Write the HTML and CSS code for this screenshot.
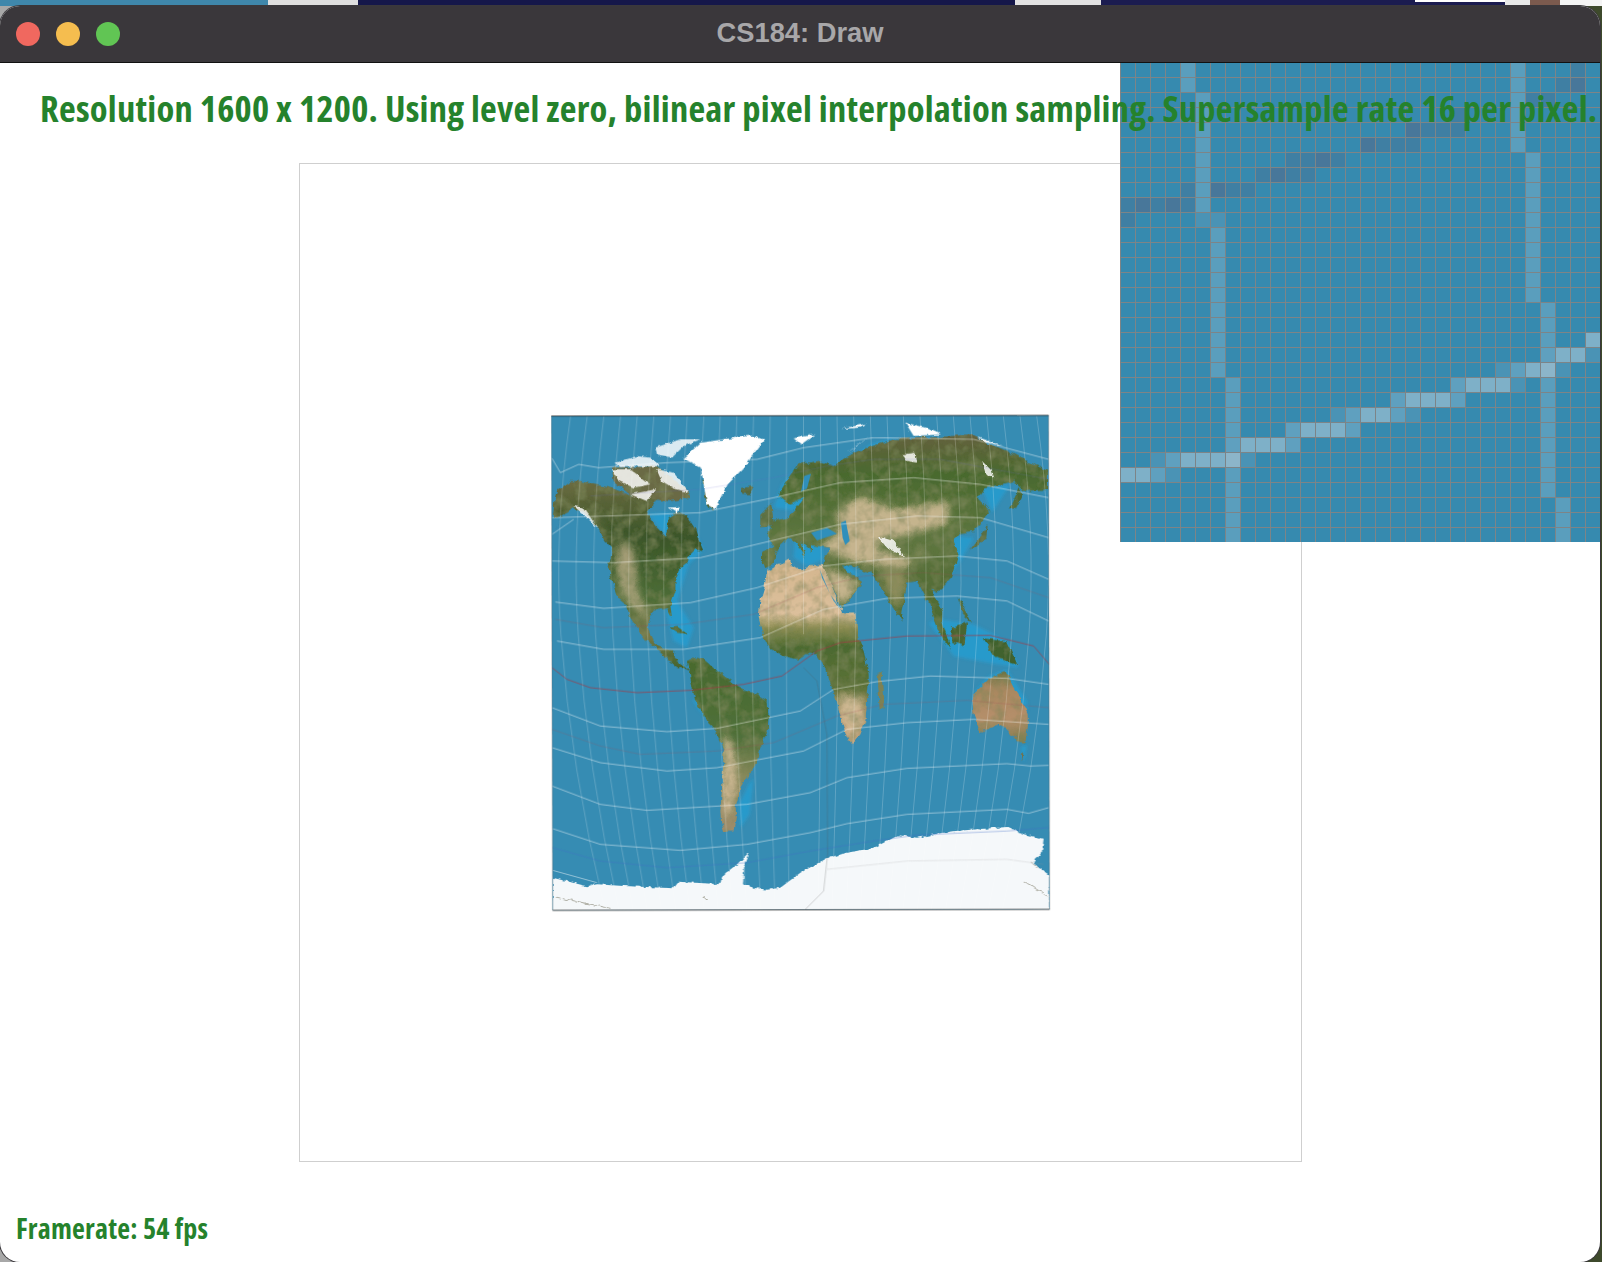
FILE: index.html
```html
<!DOCTYPE html>
<html lang="en">
<head>
<meta charset="utf-8">
<title>CS184: Draw</title>
<link rel="stylesheet" href="styles.css">
</head>
<body>
<div class="desktop-strip">
  <span class="seg seg-blue"></span><span class="seg seg-paper"></span><span class="seg seg-navy"></span><span class="seg seg-light"></span><span class="seg seg-navy2"></span><span class="seg seg-white"></span><span class="seg seg-paper2"></span><span class="seg seg-face"></span><span class="seg seg-white2"></span>
</div>
<main class="window">
  <header class="titlebar">
    <div class="lights"><span class="light red"></span><span class="light yellow"></span><span class="light green"></span></div>
    <div class="title">CS184: Draw</div>
  </header>
  <section class="content">
    <p class="status">Resolution 1600 x 1200. Using level zero, bilinear pixel interpolation sampling. Supersample rate 16 per pixel.</p>
    <div class="canvas">
      <svg class="map" viewBox="550 412 500 500" aria-label="World map">
        <defs>
          <clipPath id="quad"><path d="M33 45L1525 43L1528 1525L37 1528Z"/></clipPath>
          <path id="na" d="M38 352L42 300L50 270L90 240L120 240L160 250L215 262L250 275L285 290L320 285L350 280L345 300L320 340L345 375L375 405L385 375L385 350L410 335L440 345L465 385L472 410L490 450L465 445L440 470L445 480L420 500L405 530L405 570L390 612L395 650L380 622L340 628L330 650L320 680L345 730L375 745L402 748L400 770L425 790L450 815L410 795L375 768L345 740L320 720L290 680L270 650L255 610L232 590L215 540L205 500L216 442L195 420L170 372L130 335L100 320L60 350L40 400L62 345Z"/>
          <path id="sa" d="M440 782L465 770L490 775L530 810L585 850L612 866L650 880L682 900L684 950L682 990L660 1040L650 1080L640 1100L615 1135L600 1160L585 1220L590 1250L582 1292L552 1292L542 1260L540 1230L546 1150L550 1050L520 980L490 945L465 900L450 830Z"/>
          <path id="af" d="M655 650L660 600L672 560L680 512L710 495L745 473L750 490L785 510L810 492L845 492L865 530L880 570L905 635L945 635L950 680L950 700L970 750L985 820L985 845L975 960L960 1000L935 1032L920 1010L905 960L880 870L850 790L830 760L805 755L775 775L745 770L690 745L670 710Z"/>
          <path id="eu" d="M665 455L665 480L672 502L700 490L705 460L720 432L745 410L770 430L795 470L780 420L815 450L815 432L870 440L855 470L845 495L860 520L905 622L965 548L950 525L925 520L905 490L950 498L1000 520L1040 590L1072 642L1090 660L1085 640L1100 545L1130 540L1170 620L1200 700L1232 745L1205 660L1206 632L1172 562L1192 572L1232 530L1255 460L1240 420L1255 400L1300 392L1350 332L1312 292L1332 262L1420 240L1450 270L1524 265L1522 210L1400 150L1330 120L1290 100L1200 108L1060 115L982 140L922 165L880 195L835 180L772 190L720 270L716 285L745 310L790 290L760 330L742 350L700 360L682 402L700 440Z"/>
          <path id="au" d="M1295 885L1320 860L1350 830L1395 810L1420 860L1445 900L1462 940L1462 980L1455 1025L1430 1020L1400 985L1375 970L1345 980L1320 995L1300 940Z"/>
          <clipPath id="landclip"><use href="#na"/><use href="#sa"/><use href="#af"/><use href="#eu"/><use href="#au"/></clipPath>
          <linearGradient id="africa" gradientUnits="userSpaceOnUse" x1="0" y1="480" x2="0" y2="1040">
            <stop offset="0" stop-color="#d4b68e"/><stop offset=".28" stop-color="#dcc09c"/><stop offset=".36" stop-color="#8b8c52"/><stop offset=".46" stop-color="#4c6a30"/><stop offset=".68" stop-color="#5d7239"/><stop offset=".82" stop-color="#b39a70"/><stop offset="1" stop-color="#c09a72"/>
          </linearGradient>
          <linearGradient id="namerica" gradientUnits="userSpaceOnUse" x1="0" y1="240" x2="0" y2="800">
            <stop offset="0" stop-color="#6b6b40"/><stop offset=".3" stop-color="#3b5629"/><stop offset=".62" stop-color="#4c6c36"/><stop offset=".82" stop-color="#75794a"/><stop offset="1" stop-color="#46642e"/>
          </linearGradient>
          <linearGradient id="samerica" gradientUnits="userSpaceOnUse" x1="0" y1="770" x2="0" y2="1300">
            <stop offset="0" stop-color="#486a2e"/><stop offset=".45" stop-color="#50703a"/><stop offset=".68" stop-color="#8a8a5c"/><stop offset="1" stop-color="#a08d6c"/>
          </linearGradient>
          <linearGradient id="eurasia" gradientUnits="userSpaceOnUse" x1="0" y1="110" x2="0" y2="720">
            <stop offset="0" stop-color="#62623c"/><stop offset=".18" stop-color="#4a6a2f"/><stop offset=".5" stop-color="#5e7640"/><stop offset=".7" stop-color="#566e38"/><stop offset="1" stop-color="#486a31"/>
          </linearGradient>
          <linearGradient id="australia" gradientUnits="userSpaceOnUse" x1="0" y1="800" x2="0" y2="1030">
            <stop offset="0" stop-color="#5d6f3a"/><stop offset=".25" stop-color="#a8875f"/><stop offset=".65" stop-color="#b58f6a"/><stop offset="1" stop-color="#7d7a4c"/>
          </linearGradient>
          <filter id="soft" x="-10%" y="-10%" width="120%" height="120%"><feGaussianBlur stdDeviation="11"/></filter>
          <filter id="haze" x="-20%" y="-20%" width="140%" height="140%"><feGaussianBlur stdDeviation="4"/></filter>
          <filter id="land" x="0" y="0" width="100%" height="100%">
            <feTurbulence type="fractalNoise" baseFrequency=".05" numOctaves="3" seed="4" result="w"/>
            <feDisplacementMap in="SourceGraphic" in2="w" scale="16" xChannelSelector="R" yChannelSelector="G" result="d"/>
            <feGaussianBlur in="d" stdDeviation="1.6" result="b"/>
            <feTurbulence type="fractalNoise" baseFrequency=".028" numOctaves="3" seed="9" result="n"/>
            <feColorMatrix in="n" type="matrix" values="0 0 0 0 .2  0 0 0 0 .24  0 0 0 0 .1  1.5 0 0 0 -.62" result="c"/>
            <feComposite in="c" in2="b" operator="in" result="m"/>
            <feMerge><feMergeNode in="b"/><feMergeNode in="m"/></feMerge>
          </filter>
          <filter id="rough" x="0" y="0" width="100%" height="100%">
            <feTurbulence type="fractalNoise" baseFrequency=".06" numOctaves="3" seed="2" result="w"/>
            <feDisplacementMap in="SourceGraphic" in2="w" scale="12" xChannelSelector="R" yChannelSelector="G" result="d"/>
            <feGaussianBlur in="d" stdDeviation="1.2"/>
          </filter>
        </defs>
        <g transform="translate(539.3 400) scale(.33333)">
          <path class="ocean" d="M33 45L1525 43L1528 1525L37 1528Z"/>
          <g clip-path="url(#quad)">
            <g class="shallow" filter="url(#haze)">
              <path d="M325 340L380 335L440 350L490 445L445 490L410 600L460 680L440 740L400 720L380 640L395 520L380 410Z"/>
              <path d="M700 320L725 250L775 195L850 205L930 175L990 130L1060 112L1000 170L850 235L770 330Z"/>
              <path d="M1165 665L1200 655L1300 670L1400 720L1435 800L1340 785L1240 765Z"/>
              <path d="M1245 405L1300 410L1260 480L1195 565L1185 545Z"/>
              <path d="M1325 262L1410 250L1355 335Z"/>
              <path d="M595 1210L625 1150L640 1130L628 1240L600 1280Z"/>
              <path d="M1300 875L1345 825L1400 805L1460 900L1462 930L1400 860Z"/>
              <path d="M455 895L475 925L500 950L470 900Z"/>
              <path d="M1440 1040L1460 1030L1452 1085Z"/>
              <path d="M840 400L810 430L765 410L760 470L800 495L850 475Z"/>
              <path d="M905 480L960 525L920 515Z"/>
            </g>
            <g filter="url(#land)">
              <use href="#na" fill="url(#namerica)"/>
              <use href="#sa" fill="url(#samerica)"/>
              <use href="#af" fill="url(#africa)"/>
              <use href="#eu" fill="url(#eurasia)"/>
              <use href="#au" fill="url(#australia)"/>
              <path fill="#7e8154" d="M1012 820L1024 815L1030 925L1018 925Z"/>
              <path fill="#4a6533" d="M1235 680L1280 668L1272 735L1232 722Z"/>
              <path fill="#40622d" d="M1330 712L1400 722L1432 792L1362 768Z"/>
              <path fill="#4d6a35" d="M1255 590L1270 615L1292 665L1268 640Z"/>
              <path fill="#4c6934" d="M1408 325L1438 262L1448 280L1428 320Z"/>
              <path fill="#5a6e42" d="M1288 448L1335 385L1342 370L1338 410L1310 435Z"/>
              <path fill="#5b6f43" d="M660 342L692 308L702 372L660 378Z"/>
              <path fill="#55683e" d="M602 262L640 255L628 280L606 278Z"/>
              <path fill="#4f6b38" d="M385 680L412 678L445 700L410 695Z"/>
              <path fill="#74704c" d="M1442 1058L1452 1055L1448 1080Z"/>
              <path fill="#51683b" d="M486 240L500 315L520 325L510 240Z"/>
              <path fill="#6a6a45" d="M215 200L350 195L445 270L450 290L390 300L280 290L220 240Z"/>
              <g clip-path="url(#landclip)">
                <g class="tan" filter="url(#soft)">
                  <path d="M885 335L960 285L1060 325L1225 300L1225 365L1130 395L1020 420L1005 445L1120 480L1140 440L1150 450L1100 500L1000 490L930 480L840 440L900 385Z"/>
                  <path d="M845 495L880 510L960 545L905 620L870 560Z"/>
                  <path class="tan-soft" d="M225 495L245 410L280 450L295 580L335 670L305 640L250 590Z"/>
                  <path d="M548 1000L572 1020L590 1100L580 1220L552 1250L548 1120Z"/>
                  <path d="M895 880L960 890L970 950L935 1030L905 950Z"/>
                  <path d="M1020 500L1090 510L1100 550L1072 630L1040 570Z" class="tan2"/>
                  <path d="M90 310L130 330L190 400L215 430L170 360Z" class="tan2"/>
                </g>
              </g>
            </g>
            <g class="ice" filter="url(#rough)">
              <path d="M430 172L480 125L630 104L672 115L610 200L562 250L525 325L500 310L490 250L482 200Z"/>
              <path class="ice-patchy" d="M226 185L290 165L330 170L360 195L240 198Z"/>
              <path class="ice-patchy" d="M345 140L420 115L480 115L430 135L395 170L350 160Z"/>
              <path class="ice-patchy" d="M215 205L270 205L330 250L280 260L235 240Z"/>
              <path class="ice-patchy" d="M350 205L400 215L445 275L400 262L365 240Z"/>
              <path class="ice-patchy" d="M270 280L345 265L320 300Z"/>
              <path d="M760 112L825 100L782 130Z"/>
              <path d="M920 155L990 104L950 135Z"/>
              <path d="M1095 65L1155 80L1202 100L1120 105Z"/>
              <path d="M900 84L980 68L960 80Z"/>
              <path d="M1310 108L1390 135L1330 122Z"/>
              <path class="ice-patchy" d="M1085 160L1125 155L1130 185L1100 180Z"/>
              <path class="ice-patchy" d="M1325 180L1350 205L1360 235L1335 215Z"/>
              <path class="ice-patchy" d="M100 315L130 320L175 385L135 345Z"/>
              <path class="ice-patchy" d="M1010 405L1060 420L1095 470L1040 440Z"/>
              <path d="M385 320L415 318L410 335Z"/>
            </g>
            <g class="sea">
              <path d="M812 395L860 380L890 398L830 418Z"/>
              <path d="M902 365L916 358L928 420L915 432L907 410Z"/>
              <path d="M838 505L870 580L905 630L880 600L845 530Z"/>
              <path d="M792 225L812 218L800 262L782 272Z"/>
            </g>
            <g transform="translate(0 750)" filter="url(#rough)">
              <path class="ant" d="M37 680L140 706L170 700L250 705L400 712L415 692L540 700L545 675L590 640L625 605L612 640L608 700L640 710L680 716L720 710L780 665L860 622L920 605L1000 590L1075 553L1130 560L1190 548L1245 540L1400 528L1450 550L1510 563L1505 600L1490 620L1480 640L1527 672L1527 790L37 790Z"/>
              <path class="nun" d="M45 738L210 772M1450 690L1520 735M1470 635L1490 650M490 735L505 750"/>
            </g>
            <g class="meridians">
              <g id="mer">
                <path d="M840 45q4 355 2 655q-2 400 -9 825M890 45q7 355 4 655q-4 400 -19 825M940 45q11 355 6 655q-6 400 -28 825M990 45q14 355 8 655q-8 400 -38 825M1040 45q18 355 10 655q-10 400 -47 825M1089 45q23 355 13 655q-13 400 -56 825M1139 45q26 355 15 655q-15 400 -66 825M1189 45q30 355 17 655q-17 400 -75 825M1239 45q33 355 19 655q-19 400 -85 825M1289 45q37 355 21 655q-21 400 -94 825M1339 45q41 355 23 655q-23 400 -103 825M1389 45q44 355 25 655q-25 400 -113 825M1439 45q48 355 27 655q-27 400 -122 825M1489 45q51 355 29 655q-29 400 -132 825"/>
              </g>
              <use href="#mer" transform="translate(1580 0) scale(-1 1)"/>
              <path d="M790 45V700"/>
            </g>
            <g class="parallels">
              <path d="M35 172L60 215L115 190L175 200L380 185L650 175L790 140L1000 110L1300 115L1525 175"/>
              <path d="M35 350L200 345L480 335L700 290L900 245L1120 230L1320 250L1525 290"/>
              <path d="M35 400L100 355M35 480L220 485L480 470L690 420L900 370L1130 345L1320 350L1525 410"/>
              <path d="M45 603L190 622L450 605L650 560L850 495L1030 475L1250 465L1400 480L1525 535"/>
              <path d="M50 720L190 745L430 745L660 710L850 625L1040 592L1250 585L1400 600L1525 660"/>
              <g transform="translate(0 750)">
                <path d="M35 170L180 225L380 242L530 232L780 180L880 115L1010 92L1170 75L1400 82L1525 100"/>
                <path d="M35 290L180 335L380 360L530 350L790 300L920 235L1100 215L1300 205L1525 220"/>
                <path d="M35 405L180 460L320 478L620 460L810 425L920 380L1100 352L1400 338L1470 345L1525 343"/>
                <path d="M37 533L180 580L420 598L620 580L810 545L920 518L1100 490L1400 475L1465 487L1525 470"/>
                <path d="M37 658L170 695"/>
                <path class="on-ice" d="M860 655L1100 630L1400 625L1510 640"/>
              </g>
            </g>
            <path class="tropic" d="M45 655L190 680L430 670L640 640L830 560L970 525L1150 515L1350 530L1525 590"/>
            <path class="tropic" d="M35 985L180 1035L300 1060L530 1050L700 1025L890 945L1030 910L1280 898L1525 920"/>
            <path class="equator" d="M35 800L80 835L150 860L290 875L450 868L610 850L725 825L830 750L900 725L1100 705L1350 703L1480 735L1527 790"/>
            <path class="polar" d="M37 1340L180 1380L380 1400L620 1385L810 1350L1000 1320L1130 1302L1400 1290L1525 1280"/>
            <path class="arctic" d="M150 285L480 265L700 230L860 195L1000 175L1200 175L1525 235"/>
            <path class="central" d="M790 800L830 840L860 1000L862 1360L850 1470L795 1525"/>
          </g>
          <path class="edge" d="M33 45L1525 43M37 1528L1528 1525"/>
          <path class="edge-side" d="M33 45L37 1528M1525 43L1528 1525"/>
        </g>
      </svg>
    </div>
    <aside class="magnifier">
      <svg class="mag-cells" viewBox="0 0 32 32" shape-rendering="crispEdges">
        <path class="c-line" d="M4 0h1v2h-1zM5 2h1v9h-1zM6 11h1v10h-1zM7 21h1v11h-1zM26 0h1v6h-1zM27 6h1v10h-1zM28 16h1v13h-1zM29 29h1v3h-1z"/>
        <path class="c-faint" d="M3 27h1v1h-1zM2 26h1v1h-1zM8 26h1v1h-1zM14 23h1v1h-1zM19 23h1v1h-1zM25 20h1v1h-1zM29 20h1v1h-1zM31 19h1v1h-1zM26 21h1v1h-1zM5 10h2v1h-2z"/>
        <path class="c-med" d="M2 27h1v1h-1zM3 26h1v1h-1zM7 25h1v1h-1zM11 25h1v1h-1zM11 24h1v1h-1zM15 24h1v1h-1zM15 23h1v1h-1zM18 23h1v1h-1zM18 22h1v1h-1zM22 22h1v1h-1zM22 21h1v1h-1zM26 20h1v1h-1zM28 19h1v1h-1z"/>
        <path class="c-bright" d="M0 27h2v1h-2zM4 26h3v1h-3zM8 25h3v1h-3zM12 24h3v1h-3zM16 23h2v1h-2zM19 22h3v1h-3zM23 21h3v1h-3zM27 20h1v1h-1zM29 19h2v1h-2zM31 18h1v1h-1z"/>
        <path class="c-top" d="M7 26h1v1h-1zM28 20h1v1h-1z"/>
        <path class="d-faint" d="M30 0h1v1h-1zM29 1h1v1h-1zM27 2h2v1h-2zM20 4h3v1h-3zM17 5h2v1h-2zM19 5h1v1h-1zM11 6h2v1h-2zM14 6h1v1h-1zM9 7h1v1h-1zM11 7h2v1h-2zM4 8h1v1h-1zM8 8h1v1h-1zM0 9h1v1h-1zM2 9h1v1h-1zM4 9h1v1h-1zM0 10h1v1h-1zM7 8h1v1h-1zM22 3h1v1h-1z"/>
        <path class="d-dark" d="M30 1h1v1h-1zM19 4h1v1h-1zM16 5h1v1h-1zM13 6h1v1h-1zM10 7h1v1h-1zM6 8h1v1h-1zM1 9h1v1h-1zM3 9h1v1h-1z"/>
      </svg>
    </aside>
    <p class="framerate">Framerate: 54 fps</p>
  </section>
</main>
</body>
</html>
```
FILE: styles.css
```css
* { box-sizing: border-box; }
html, body { margin: 0; height: 100%; }
body {
  background: linear-gradient(90deg, #a8a8a8 50%, #3e4a2c 50%);
  overflow: hidden;
  font-family: "Open Sans", "Liberation Sans", sans-serif;
  display: flex;
  flex-direction: column;
}
.desktop-strip { display: flex; height: 6px; flex: none; background: #15174a; }
.seg { display: block; height: 100%; }
.seg-blue { width: 268px; background: #3f87ab; }
.seg-paper { width: 90px; background: #dfdfdf; }
.seg-navy { width: 657px; background: #15174a; }
.seg-light { width: 86px; background: #e2e2e2; }
.seg-navy2 { width: 314px; background: #1b1c50; }
.seg-white { width: 90px; background: linear-gradient(#fff 2px, #1b1c50 2px); }
.seg-paper2 { width: 25px; background: #e8e8e8; }
.seg-face { width: 30px; background: #7b5a4e; }
.seg-white2 { flex: 1; background: #f4f4f4; }
.window {
  flex: 1;
  width: 1600px;
  margin-right: 2px;
  display: flex;
  flex-direction: column;
  border-radius: 20px;
  overflow: hidden;
  background: #fff;
  box-shadow: 0 0 0 1px #3a383c;
}
.titlebar {
  flex: none;
  height: 57px;
  background: #3a373b;
  border-bottom: 1px solid #111;
  display: flex;
  align-items: center;
  position: relative;
  z-index: 3;
}
.lights { display: flex; gap: 16px; padding-left: 16px; }
.light { width: 24px; height: 24px; border-radius: 50%; }
.red { background: #f0685f; }
.yellow { background: #f5bd4f; }
.green { background: #61c554; }
.title {
  position: absolute;
  left: 0; right: 0; top: -1px; bottom: 1px;
  display: flex; align-items: center; justify-content: center;
  font: bold 27.3px "Liberation Sans", Arial, sans-serif;
  color: #a8a7a9;
}
.content { flex: 1; position: relative; display: flex; flex-direction: column; }
.status {
  position: relative;
  z-index: 2;
  margin: 0;
  padding: 21px 0 0 40px;
  height: 100px;
  font-size: 36.5px;
  line-height: 48px;
  letter-spacing: .25px;
  font-weight: 700;
  font-stretch: 75%;
  color: #25822c;
  white-space: nowrap;
}
.canvas {
  width: 1003px;
  height: 999px;
  margin-left: 299px;
  border: 1px solid #cfcfcf;
  display: flex;
  align-items: center;
  justify-content: center;
  flex: none;
}
.map { width: 500px; height: 500px; display: block; }
.ocean { fill: #368cb3; }
.shallow path { fill: #1fa3da; opacity: .6; }
.tan path { fill: #d8bf9c; opacity: .85; }
.tan .tan-soft { opacity: .65; }
.tan .tan2 { fill: #a79a6c; opacity: .7; }
.ice path { fill: #fff; }
.ice .ice-patchy { opacity: .82; }
.sea path { fill: #2f8fbb; }
.ant { fill: #f5f8fa; }
.nun { fill: none; stroke: #8b8a78; stroke-width: 2; }
.meridians path, .parallels path { fill: none; stroke: #fff; }
.meridians path { stroke-width: 1.5; opacity: .42; }
.parallels path { stroke-width: 2; opacity: .7; stroke-linejoin: round; }
.parallels .on-ice { stroke: #999; opacity: .3; }
.tropic { fill: none; stroke: #a5505c; stroke-width: 1.6; opacity: .45; }
.equator { fill: none; stroke: #a53a46; stroke-width: 2.4; opacity: .85; }
.polar { fill: none; stroke: #4570c8; stroke-width: 2; opacity: .6; }
.arctic { fill: none; stroke: #6a6fd0; stroke-width: 1.4; opacity: .4; }
.central { fill: none; stroke: #555; stroke-width: 1.4; opacity: .55; }
.edge { fill: none; stroke: #333; stroke-width: 2.6; }
.edge-side { fill: none; stroke: #666; stroke-width: 1.2; }
.magnifier {
  position: absolute;
  left: 1120px;
  top: -1px;
  width: 480px;
  height: 480px;
  background: #368aaf;
  z-index: 1;
}
.magnifier::after {
  content: "";
  position: absolute;
  inset: 0;
  background-image: linear-gradient(#7d8487 1px, transparent 1px), linear-gradient(90deg, #7d8487 1px, transparent 1px);
  background-size: 15px 15px;
}
.mag-cells { display: block; width: 480px; height: 480px; }
.c-line { fill: #5a9ebd; }
.c-faint { fill: #4a93b5; }
.c-med { fill: #5fa0bf; }
.c-bright { fill: #7eb0c8; }
.c-top { fill: #8cb5c9; }
.d-faint { fill: #3f7fa3; }
.d-dark { fill: #48779a; }
.framerate {
  margin: auto 0 0;
  padding: 0 0 16px 16px;
  font-size: 28px;
  line-height: 36px;
  letter-spacing: .2px;
  font-weight: 700;
  font-stretch: 75%;
  color: #25822c;
}
```
